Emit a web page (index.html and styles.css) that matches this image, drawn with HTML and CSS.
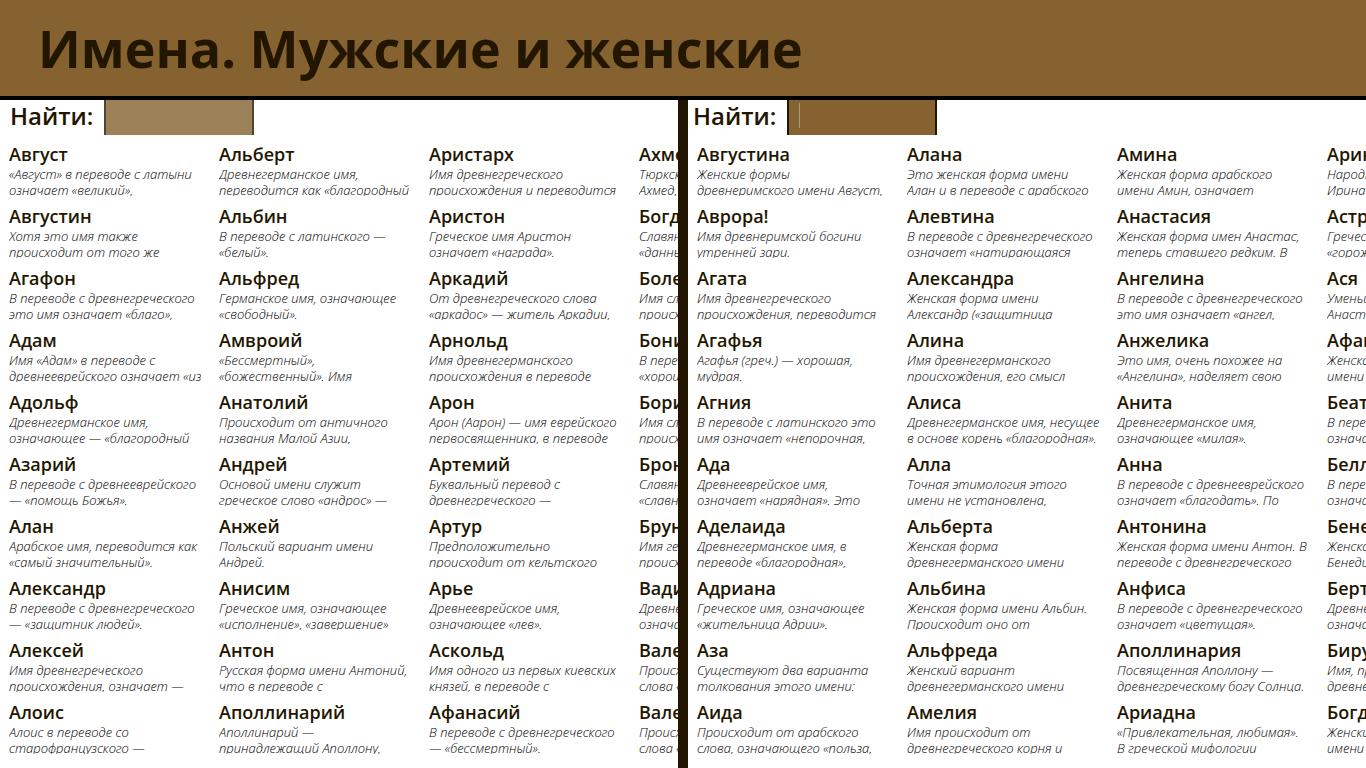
FILE: index.html
```html
<!DOCTYPE html>
<html lang="ru">
<head>
    <meta charset="UTF-8">
    <meta name="viewport" content="width=device-width, initial-scale=1.0">
    <title>Имена. Мужские и женские</title>
    <link rel="stylesheet" href="styles.css">
</head>
<body>
    <header>
        <h1>Имена. Мужские и женские</h1>
    </header>

    <main>
        <section class="pane">
            <form class="search">
                <label for="find-male">Найти:</label>
                <input type="text" id="find-male">
            </form>
            <ul class="names">
                <li><h2>Август</h2><p>«Август» в переводе с латыни<br>означает «великий»,</p></li>
                <li><h2>Августин</h2><p>Хотя это имя также<br>происходит от того же</p></li>
                <li><h2>Агафон</h2><p>В переводе с древнегреческого<br>это имя означает «благо»,</p></li>
                <li><h2>Адам</h2><p>Имя «Адам» в переводе с<br>древнееврейского означает «из</p></li>
                <li><h2>Адольф</h2><p>Древнегерманское имя,<br>означающее — «благородный</p></li>
                <li><h2>Азарий</h2><p>В переводе с древнееврейского<br>— «помощь Божья».</p></li>
                <li><h2>Алан</h2><p>Арабское имя, переводится как<br>«самый значительный».</p></li>
                <li><h2>Александр</h2><p>В переводе с древнегреческого<br>— «защитник людей».</p></li>
                <li><h2>Алексей</h2><p>Имя древнегреческого<br>происхождения, означает —</p></li>
                <li><h2>Алоис</h2><p>Алоис в переводе со<br>старофранцузского —</p></li>

                <li><h2>Альберт</h2><p>Древнегерманское имя,<br>переводится как «благородный</p></li>
                <li><h2>Альбин</h2><p>В переводе с латинского —<br>«белый».</p></li>
                <li><h2>Альфред</h2><p>Германское имя, означающее<br>«свободный».</p></li>
                <li><h2>Амвроий</h2><p>«Бессмертный»,<br>«божественный». Имя</p></li>
                <li><h2>Анатолий</h2><p>Происходит от античного<br>названия Малой Азии,</p></li>
                <li><h2>Андрей</h2><p>Основой имени служит<br>греческое слово «андрос» —</p></li>
                <li><h2>Анжей</h2><p>Польский вариант имени<br>Андрей.</p></li>
                <li><h2>Анисим</h2><p>Греческое имя, означающее<br>«исполнение», «завершение»</p></li>
                <li><h2>Антон</h2><p>Русская форма имени Антоний,<br>что в переводе с</p></li>
                <li><h2>Аполлинарий</h2><p>Аполлинарий —<br>принадлежащий Аполлону,</p></li>

                <li><h2>Аристарх</h2><p>Имя древнегреческого<br>происхождения и переводится</p></li>
                <li><h2>Аристон</h2><p>Греческое имя Аристон<br>означает «награда».</p></li>
                <li><h2>Аркадий</h2><p>От древнегреческого слова<br>«аркадос» — житель Аркадии,</p></li>
                <li><h2>Арнольд</h2><p>Имя древнегерманского<br>происхождения в переводе</p></li>
                <li><h2>Арон</h2><p>Арон (Аарон) — имя еврейского<br>первосвященника, в переводе</p></li>
                <li><h2>Артемий</h2><p>Буквальный перевод с<br>древнегреческого —</p></li>
                <li><h2>Артур</h2><p>Предположительно<br>происходит от кельтского</p></li>
                <li><h2>Арье</h2><p>Древнееврейское имя,<br>означающее «лев».</p></li>
                <li><h2>Аскольд</h2><p>Имя одного из первых киевских<br>князей, в переводе с</p></li>
                <li><h2>Афанасий</h2><p>В переводе с древнегреческого<br>— «бессмертный».</p></li>

                <li><h2>Ахмед</h2><p>Тюркское<br>Ахмед,</p></li>
                <li><h2>Богдан</h2><p>Славянское<br>«данный</p></li>
                <li><h2>Болеслав</h2><p>Имя славянского<br>происхождения</p></li>
                <li><h2>Бонифаций</h2><p>В переводе<br>«хороший</p></li>
                <li><h2>Борис</h2><p>Имя славянского<br>происхождения</p></li>
                <li><h2>Бронислав</h2><p>Славянское<br>«славный</p></li>
                <li><h2>Бруно</h2><p>Имя германского<br>происхождения</p></li>
                <li><h2>Вадим</h2><p>Древнерусское<br>означает</p></li>
                <li><h2>Валентин</h2><p>Происходит от<br>слова «валео»</p></li>
                <li><h2>Валерий</h2><p>Происходит от<br>слова «валео»</p></li>
            </ul>
        </section>

        <section class="pane">
            <form class="search active">
                <label for="find-female">Найти:</label>
                <input type="text" id="find-female">
            </form>
            <ul class="names">
                <li><h2>Августина</h2><p>Женские формы<br>древнеримского имени Август,</p></li>
                <li><h2>Аврора!</h2><p>Имя древнеримской богини<br>утренней зари.</p></li>
                <li><h2>Агата</h2><p>Имя древнегреческого<br>происхождения, переводится</p></li>
                <li><h2>Агафья</h2><p>Агафья (греч.) — хорошая,<br>мудрая.</p></li>
                <li><h2>Агния</h2><p>В переводе с латинского это<br>имя означает «непорочная,</p></li>
                <li><h2>Ада</h2><p>Древнееврейское имя,<br>означает «нарядная». Это</p></li>
                <li><h2>Аделаида</h2><p>Древнегерманское имя, в<br>переводе «благородная»,</p></li>
                <li><h2>Адриана</h2><p>Греческое имя, означающее<br>«жительница Адрии».</p></li>
                <li><h2>Аза</h2><p>Существуют два варианта<br>толкования этого имени:</p></li>
                <li><h2>Аида</h2><p>Происходит от арабского<br>слова, означающего «польза,</p></li>

                <li><h2>Алана</h2><p>Это женская форма имени<br>Алан и в переводе с арабского</p></li>
                <li><h2>Алевтина</h2><p>В переводе с древнегреческого<br>означает «натирающаяся</p></li>
                <li><h2>Александра</h2><p>Женская форма имени<br>Александр («защитница</p></li>
                <li><h2>Алина</h2><p>Имя древнегерманского<br>происхождения, его смысл</p></li>
                <li><h2>Алиса</h2><p>Древнегерманское имя, несущее<br>в основе корень «благородная».</p></li>
                <li><h2>Алла</h2><p>Точная этимология этого<br>имени не установлена,</p></li>
                <li><h2>Альберта</h2><p>Женская форма<br>древнегерманского имени</p></li>
                <li><h2>Альбина</h2><p>Женская форма имени Альбин.<br>Происходит оно от</p></li>
                <li><h2>Альфреда</h2><p>Женский вариант<br>древнегерманского имени</p></li>
                <li><h2>Амелия</h2><p>Имя происходит от<br>древнегреческого корня и</p></li>

                <li><h2>Амина</h2><p>Женская форма арабского<br>имени Амин, означает</p></li>
                <li><h2>Анастасия</h2><p>Женская форма имен Анастас,<br>теперь ставшего редким. В</p></li>
                <li><h2>Ангелина</h2><p>В переводе с древнегреческого<br>это имя означает «ангел,</p></li>
                <li><h2>Анжелика</h2><p>Это имя, очень похожее на<br>«Ангелина», наделяет свою</p></li>
                <li><h2>Анита</h2><p>Древнегерманское имя,<br>означающее «милая».</p></li>
                <li><h2>Анна</h2><p>В переводе с древнееврейского<br>означает «благодать». По</p></li>
                <li><h2>Антонина</h2><p>Женская форма имени Антон. В<br>переводе с древнегреческого</p></li>
                <li><h2>Анфиса</h2><p>В переводе с древнегреческого<br>означает «цветущая».</p></li>
                <li><h2>Аполлинария</h2><p>Посвященная Аполлону —<br>древнегреческому богу Солнца.</p></li>
                <li><h2>Ариадна</h2><p>«Привлекательная, любимая».<br>В греческой мифологии</p></li>

                <li><h2>Арина</h2><p>Народная<br>Ирина</p></li>
                <li><h2>Астра</h2><p>Греческое<br>«горожанка</p></li>
                <li><h2>Ася</h2><p>Уменьшительное<br>Анастасия</p></li>
                <li><h2>Афанасия</h2><p>Женская<br>имени Афанасий</p></li>
                <li><h2>Беата</h2><p>В переводе<br>означает</p></li>
                <li><h2>Белла</h2><p>В переводе<br>означает</p></li>
                <li><h2>Бенедикта</h2><p>Женская<br>Бенедикт</p></li>
                <li><h2>Берта</h2><p>Древнегерманское<br>означает</p></li>
                <li><h2>Бирута</h2><p>Имя, пришедшее<br>древнего</p></li>
                <li><h2>Богдана</h2><p>Женский<br>имени Богдан</p></li>
            </ul>
        </section>
    </main>
</body>
</html>
```
FILE: styles.css
```css
* {
    box-sizing: border-box;
}
body {
    margin: 0;
    height: 100vh;
    display: flex;
    flex-direction: column;
    overflow: hidden;
    background: #fff;
    color: #231600;
    font-family: "Segoe UI", "Open Sans", sans-serif;
}
header {
    background: #85622f;
    border-bottom: 4px solid #000;
    padding: 8px 38px;
}
h1 {
    margin: 0;
    font-size: 52px;
    line-height: 80px;
    font-weight: 700;
    white-space: nowrap;
}
main {
    flex: 1;
    min-height: 0;
    display: flex;
}
.pane {
    flex: 1;
    min-width: 0;
    overflow: hidden;
}
.pane + .pane {
    border-left: 10px solid #231600;
    flex-basis: 10px;
}
.search {
    position: relative;
    display: flex;
    padding-left: 10px;
    gap: 11px;
    margin-bottom: 8px;
}
.search label {
    font-size: 24px;
    line-height: 32px;
    font-weight: 600;
}
.search input {
    width: 150px;
    height: 35px;
    border: solid #4f4533;
    border-width: 0 2px;
    border-radius: 0;
    padding: 0 10px;
    background: #9d8158;
    color: #231600;
    font: inherit;
    font-size: 18px;
    outline: none;
}
.search.active {
    padding-left: 5px;
}
.search.active input {
    background: #85622f;
    border-color: #231600;
}
/* text cursor */
.search.active::after {
    content: "";
    position: absolute;
    top: 3px;
    left: 111px;
    width: 1px;
    height: 25px;
    background: #a39a90;
}
.names {
    list-style: none;
    margin: 0;
    padding: 0 9px;
    display: grid;
    grid-auto-flow: column;
    grid-template-rows: repeat(10, 53px);
    grid-auto-columns: 200px;
    gap: 9px 10px;
}
.names li {
    overflow: hidden;
}
.names h2 {
    margin: 0 0 1px;
    font-size: 18px;
    line-height: 22px;
    font-weight: 600;
    white-space: nowrap;
}
.names p {
    margin: 0;
    color: #000;
    font-size: 13px;
    line-height: 16px;
    font-weight: 300;
    font-style: italic;
    white-space: nowrap;
}
```
